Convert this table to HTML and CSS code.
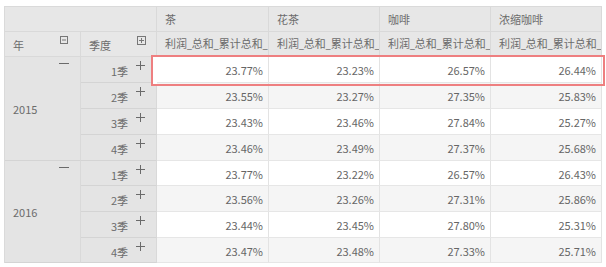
FILE: index.html
```html
<!DOCTYPE html>
<html>
<head>
<meta charset="utf-8">
<link rel="stylesheet" href="styles.css">
</head>
<body>
<div class="wrap">
  <div class="grid">
    <div class="cell head corner"></div>
    <div class="cell head col">茶</div>
    <div class="cell head col">花茶</div>
    <div class="cell head col">咖啡</div>
    <div class="cell head col">浓缩咖啡</div>

    <div class="cell head dim">年<svg class="boxicon" viewBox="0 0 8 8"><rect x="0.5" y="0.5" width="7" height="7" fill="none" stroke="#777"/><line x1="2" y1="4" x2="6" y2="4" stroke="#777"/></svg></div>
    <div class="cell head dim">季度<svg class="boxicon plusbox" viewBox="0 0 9 9"><rect x="0.5" y="0.5" width="8" height="8" fill="none" stroke="#777"/><line x1="2" y1="4.5" x2="7" y2="4.5" stroke="#777"/><line x1="4.5" y1="2" x2="4.5" y2="7" stroke="#777"/></svg></div>
    <div class="cell head col measure">利润_总和_累计总和_</div>
    <div class="cell head col measure">利润_总和_累计总和_</div>
    <div class="cell head col measure">利润_总和_累计总和_</div>
    <div class="cell head col measure">利润_总和_累计总和_</div>

    <div class="cell year">2015<span class="minus"></span></div>
    <div class="cell q">1季<span class="plus"></span></div>
    <div class="cell v">23.77%</div><div class="cell v">23.23%</div><div class="cell v">26.57%</div><div class="cell v">26.44%</div>
    <div class="cell q">2季<span class="plus"></span></div>
    <div class="cell v alt">23.55%</div><div class="cell v alt">23.27%</div><div class="cell v alt">27.35%</div><div class="cell v alt">25.83%</div>
    <div class="cell q">3季<span class="plus"></span></div>
    <div class="cell v">23.43%</div><div class="cell v">23.46%</div><div class="cell v">27.84%</div><div class="cell v">25.27%</div>
    <div class="cell q">4季<span class="plus"></span></div>
    <div class="cell v alt">23.46%</div><div class="cell v alt">23.49%</div><div class="cell v alt">27.37%</div><div class="cell v alt">25.68%</div>

    <div class="cell year">2016<span class="minus"></span></div>
    <div class="cell q">1季<span class="plus"></span></div>
    <div class="cell v">23.77%</div><div class="cell v">23.22%</div><div class="cell v">26.57%</div><div class="cell v">26.43%</div>
    <div class="cell q">2季<span class="plus"></span></div>
    <div class="cell v alt">23.56%</div><div class="cell v alt">23.26%</div><div class="cell v alt">27.31%</div><div class="cell v alt">25.86%</div>
    <div class="cell q">3季<span class="plus"></span></div>
    <div class="cell v">23.44%</div><div class="cell v">23.45%</div><div class="cell v">27.80%</div><div class="cell v">25.31%</div>
    <div class="cell q">4季<span class="plus"></span></div>
    <div class="cell v alt">23.47%</div><div class="cell v alt">23.48%</div><div class="cell v alt">27.33%</div><div class="cell v alt">25.71%</div>
  </div>
  <div class="highlight"></div>
</div>
</body>
</html>
```

FILE: styles.css
```css
html, body {
  margin: 0;
  padding: 0;
  background: #fff;
}
body {
  font-family: "Noto Sans CJK SC", "Noto Sans", sans-serif;
  font-size: 11px;
  color: #6c6c6c;
}
.wrap {
  position: relative;
  padding: 6px 0 0 4px;
}
.grid {
  display: grid;
  width: 598px;
  box-sizing: border-box;
  grid-template-columns: 76px 76px 112px 111px 111px 111px;
  grid-template-rows: 25px 25px 26px 26px 26px 26px 25px 26px 26px 25px;
  border-top: 1px solid #dadada;
  border-left: 1px solid #dadada;
}
.cell {
  position: relative;
  box-sizing: border-box;
  border-right: 1px solid #e3e3e3;
  border-bottom: 1px solid #e6e6e6;
  display: flex;
  align-items: center;
  white-space: nowrap;
  overflow: hidden;
  line-height: 14px;
}
.head {
  background: #e7e7e7;
  border-right-color: #d9d9d9;
  border-bottom-color: #d9d9d9;
  padding-left: 8px;
}
.corner {
  grid-column: span 2;
}
.dim {
  padding-top: 2px;
}
.measure {
  padding-right: 2px;
  font-family: "Open Sans", "Noto Sans CJK SC", sans-serif;
}
.boxicon {
  position: absolute;
  right: 12px;
  top: 4px;
  width: 8px;
  height: 8px;
}
.boxicon.plusbox {
  width: 9px;
  height: 9px;
  right: 10px;
}
.year {
  grid-row: span 4;
  background: #e4e4e4;
  border-right-color: #d9d9d9;
  border-bottom-color: #d4d4d4;
  padding-left: 8px;
}
.minus {
  position: absolute;
  right: 11px;
  top: 6px;
  width: 10px;
  height: 1px;
  background: #6a6a6a;
}
.q {
  background: #e4e4e4;
  border-right-color: #d9d9d9;
  border-bottom-color: #d4d4d4;
  justify-content: flex-end;
  padding-right: 28px;
  padding-top: 3px;
}
.plus {
  position: absolute;
  right: 11px;
  top: 4px;
  width: 9px;
  height: 9px;
  background:
    linear-gradient(#6a6a6a, #6a6a6a) center / 9px 1px no-repeat,
    linear-gradient(#6a6a6a, #6a6a6a) center / 1px 9px no-repeat;
}
.v {
  background: #fff;
  justify-content: flex-end;
  padding-right: 5px;
  padding-top: 1px;
  color: #666;
}
.v.alt {
  background: #f5f5f5;
}
.highlight {
  position: absolute;
  left: 151px;
  top: 55px;
  width: 454px;
  height: 31px;
  box-sizing: border-box;
  border: 2px solid #ee7f80;
  background: linear-gradient(to right, #fff 4px, transparent 4px);
  pointer-events: none;
}
```
